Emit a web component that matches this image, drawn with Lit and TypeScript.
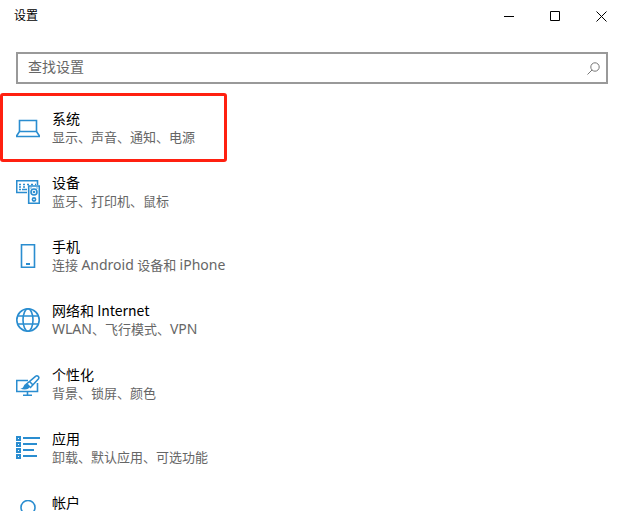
import { LitElement, html, svg, css } from "lit";
import { customElement } from "lit/decorators.js";

interface Category {
  title: string;
  detail: string;
  icon: unknown;
  marked?: boolean;
}

const laptop = svg`
  <path d="M3.500 15.500V4.500h17v11"/>
  <path d="M3.500 15.500h17l3 4.500v.5H.5V20z"/>`;

const devices = svg`
  <path d="M11 12.500H.7V.7h20.800V5"/>
  <path d="M3 4.500h2M7 4.500h2M11 4.500h2M15 4.500h2M19 4.500h1M3 7h2M7 7h2M3 9.500h2M6 9.500h5"/>
  <path d="M12.700 6h10.600v17.300H12.700z"/>
  <circle cx="18" cy="12" r="3"/>
  <circle cx="18" cy="12" r=".5"/>
  <circle cx="18" cy="19.500" r="1.600"/>
  <path d="M14.500 8h1M20.500 8h1"/>`;

const phone = svg`
  <path d="M5.500.7h13v22.600h-13z"/>
  <path d="M10 20h4" stroke-width="2"/>`;

const globe = svg`
  <circle cx="12" cy="12" r="11.200"/>
  <ellipse cx="12" cy="12" rx="5" ry="11.200"/>
  <path d="M1.500 8h21M1.500 16h21"/>`;

const brush = svg`
  <path d="M12 8.500H.7v11h20.800V11M11.500 20v3M7 23.300h9"/>
  <path d="M10.500 12 19.500 4.300c2-1.500 4.300.7 2.800 2.700L14.500 15.500z"/>
  <path d="m13.500 9.500 3.500 3.500"/>
  <path d="M4 16.500c3 0 3-1 4-3 1-2 5-2 5.500 1 0 3-5 4-9.500 2z" fill="#2a8dd0" stroke="none"/>`;

const apps = svg`
  <path d="M1 1h3v3H1zM1 7h3v3H1zM1 13h3v3H1zM1 19h3v3H1z" stroke-width="2"/>
  <path d="M7 2h17M7 8h14M7 14h11M7 20h14" stroke-width="2"/>`;

const person = svg`
  <circle cx="12" cy="7.500" r="7"/>
  <path d="M1 24c1-12 21-12 22 0"/>`;

const categories: Category[] = [
  { title: "系统", detail: "显示、声音、通知、电源", icon: laptop, marked: true },
  { title: "设备", detail: "蓝牙、打印机、鼠标", icon: devices },
  { title: "手机", detail: "连接 Android 设备和 iPhone", icon: phone },
  { title: "网络和 Internet", detail: "WLAN、飞行模式、VPN", icon: globe },
  { title: "个性化", detail: "背景、锁屏、颜色", icon: brush },
  { title: "应用", detail: "卸载、默认应用、可选功能", icon: apps },
  { title: "帐户", detail: "", icon: person },
];

// Latin words in a detail line are set one size larger than the Chinese text.
const withLatin = (text: string) =>
  text
    .split(/([A-Za-z]+)/)
    .map((part, i) => (i % 2 ? html`<span class="latin">${part}</span>` : part));

@customElement("settings-item")
export class SettingsItem extends LitElement {
  static properties = { category: { attribute: false } };
  declare category: Category;

  static styles = css`
    :host {
      display: block;
      position: relative;
    }
    .link {
      display: flex;
      align-items: center;
      gap: 12px;
      height: 64px;
      padding: 0 16px;
      color: #000;
      text-decoration: none;
    }
    .icon {
      flex: none;
      width: 24px;
      height: 24px;
      fill: none;
      stroke: #2a8dd0;
      stroke-width: 1.6;
    }
    .title,
    .detail {
      display: block;
      height: 18px;
      line-height: 18px;
      white-space: nowrap;
    }
    .title {
      font-family: "Noto Sans CJK SC", sans-serif;
      font-size: 14px;
      line-height: 16px;
    }
    .detail {
      font-size: 13px;
      color: #666;
    }
    .latin {
      font-size: 14px;
    }
    .mark {
      position: absolute;
      inset: -3px auto -2px 0;
      width: 227px;
      box-sizing: border-box;
      border: 3px solid #ff2010;
      border-radius: 3px;
      pointer-events: none;
    }
  `;

  render() {
    const { title, detail, icon, marked } = this.category;
    return html`
      <a class="link" href="#">
        <svg class="icon" viewBox="0 0 24 24" aria-hidden="true">${icon}</svg>
        <span>
          <span class="title">${title}</span>
          <span class="detail">${withLatin(detail)}</span>
        </span>
      </a>
      ${marked ? html`<div class="mark"></div>` : null}
    `;
  }
}

@customElement("app-root")
export class AppRoot extends LitElement {
  static styles = css`
    :host {
      display: flex;
      flex-direction: column;
      height: 100vh;
      overflow: hidden;
      background: #fff;
      color: #000;
      font-family: "Noto Sans", "Noto Sans CJK SC", sans-serif;
    }
    .titlebar {
      flex: none;
      display: flex;
      align-items: center;
      height: 32px;
      padding-left: 14px;
    }
    .caption {
      flex: 1;
      margin: 0;
      font-size: 12px;
      font-weight: 400;
      line-height: 20px;
    }
    .control {
      display: grid;
      place-items: center;
      width: 46px;
      height: 32px;
      padding: 0;
      border: 0;
      background: none;
    }
    .glyph {
      width: 11px;
      height: 11px;
      fill: none;
      stroke: #000;
    }
    .search {
      flex: none;
      display: flex;
      align-items: center;
      box-sizing: border-box;
      height: 32px;
      margin: 20px 16px 12px;
      padding: 0 6px 0 10px;
      border: 2px solid #999;
    }
    .field {
      flex: 1;
      min-width: 0;
      padding: 0 0 2px;
      border: 0;
      outline: 0;
      background: none;
      font: inherit;
      font-size: 14px;
      line-height: 20px;
    }
    .field::placeholder {
      color: #666;
      opacity: 1;
    }
    .lens {
      width: 13px;
      height: 13px;
      fill: none;
      stroke: #777;
    }
    .list {
      flex: none;
      margin: 0;
      padding: 0;
      list-style: none;
    }
  `;

  render() {
    return html`
      <header class="titlebar">
        <h1 class="caption">设置</h1>
        <button class="control" aria-label="最小化">
          <svg class="glyph" viewBox="0 0 11 11"><path d="M0 5.500h10" /></svg>
        </button>
        <button class="control" aria-label="最大化">
          <svg class="glyph" viewBox="0 0 11 11"><path d="M.5.5h9v9h-9z" /></svg>
        </button>
        <button class="control" aria-label="关闭">
          <svg class="glyph" viewBox="0 0 11 11"><path d="m.5.5 10 10M10.500.5l-10 10" /></svg>
        </button>
      </header>
      <label class="search">
        <input class="field" type="text" placeholder="查找设置" aria-label="查找设置" />
        <svg class="lens" viewBox="0 0 13 13" aria-hidden="true">
          <circle cx="8" cy="5" r="4.200" />
          <path d="M5 8 .5 12.500" />
        </svg>
      </label>
      <ul class="list">
        ${categories.map((c) => html`<li><settings-item .category=${c}></settings-item></li>`)}
      </ul>
    `;
  }
}
